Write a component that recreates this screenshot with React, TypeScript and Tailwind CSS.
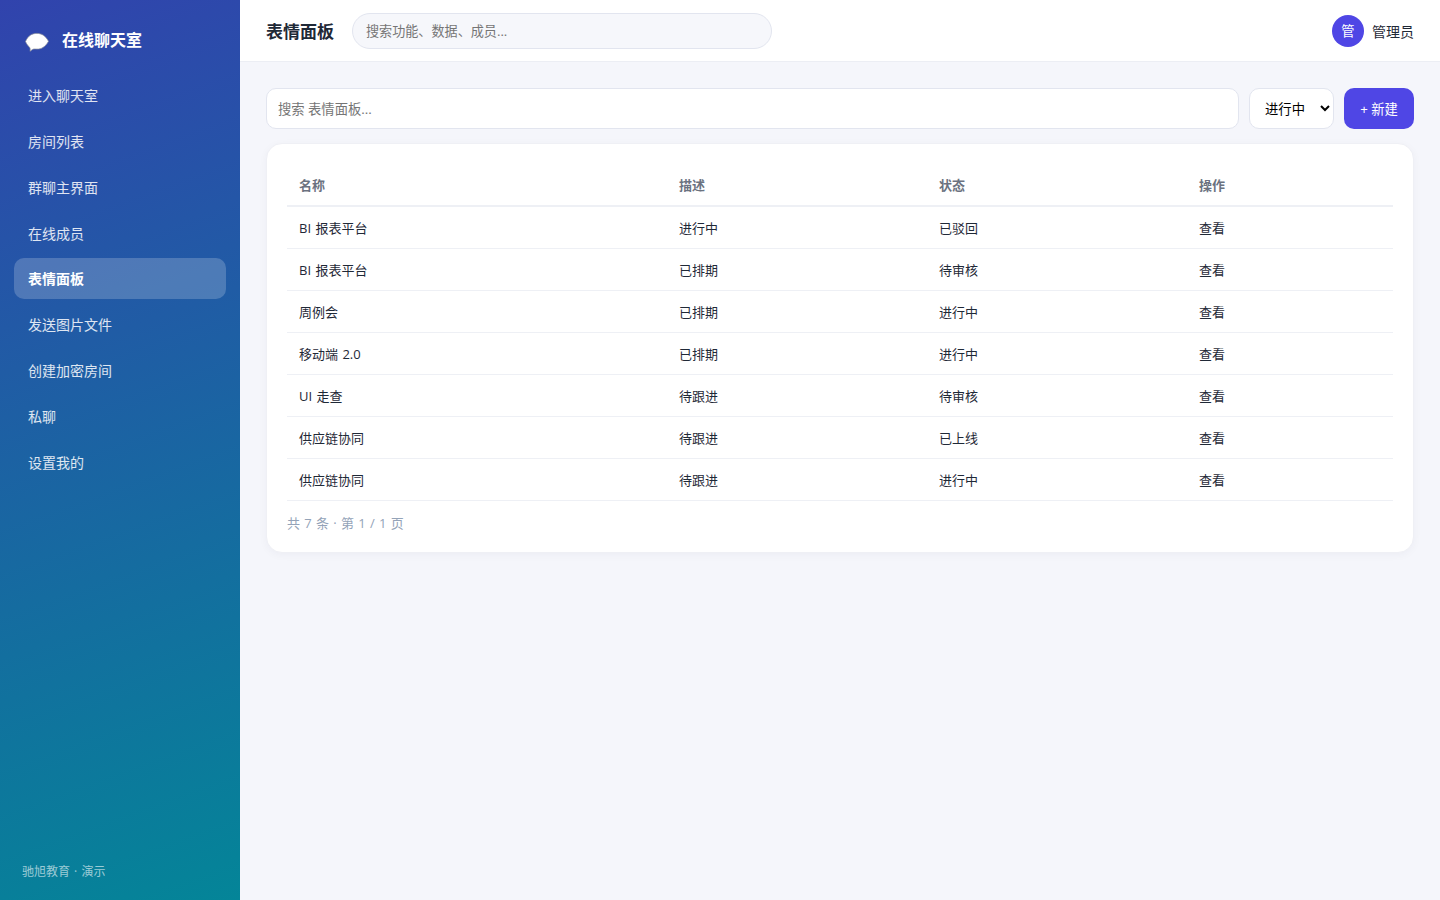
const navItems = [
  "进入聊天室",
  "房间列表",
  "群聊主界面",
  "在线成员",
  "表情面板",
  "发送图片文件",
  "创建加密房间",
  "私聊",
  "设置我的",
];

const rows = [
  ["BI 报表平台", "进行中", "已驳回"],
  ["BI 报表平台", "已排期", "待审核"],
  ["周例会", "已排期", "进行中"],
  ["移动端 2.0", "已排期", "进行中"],
  ["UI 走查", "待跟进", "待审核"],
  ["供应链协同", "待跟进", "已上线"],
  ["供应链协同", "待跟进", "进行中"],
];

function Sidebar({ active }: { active: string }) {
  return (
    <aside className="w-60 shrink-0 flex flex-col px-3.5 text-white bg-[linear-gradient(160deg,#3143ad,#048598)]">
      <div className="h-[74.5px] pt-[26px] pl-2.5 flex items-start gap-3">
        <svg width="26" height="28" viewBox="0 0 26 28" className="shrink-0">
          <path
            d="M12.8 7.4c4.800 0 8.500 2 11.700 7.900-3.300 5.900-7.200 7.800-11.500 7.800-1.200 0-2.100-.2-3.100-.1-1.500.1-2.800 1.600-3.900 2.300.3-1.800.3-3.100-.5-4C4 19.800 2.600 18 1.500 15.500 4.200 9.400 8.200 7.400 12.800 7.400z"
            fill="#fff"
            stroke="#8b8f9c"
            strokeWidth="0.7"
          />
        </svg>
        <span className="text-base leading-7 font-bold">在线聊天室</span>
      </div>

      <nav className="flex flex-col gap-[5px]">
        {navItems.map((item) => (
          <a
            key={item}
            className={
              item === active
                ? "h-[40.9px] pt-px px-3.5 flex items-center rounded-[10px] text-sm font-bold bg-white/20"
                : "h-[40.9px] pt-0.5 px-3.5 flex items-center rounded-[10px] text-sm text-white/85"
            }
          >
            {item}
          </a>
        ))}
      </nav>

      <div className="mt-auto mb-[19px] pl-2 text-xs leading-[18px] [word-spacing:1px] text-white/60">
        驰旭教育 · 演示
      </div>
    </aside>
  );
}

function Topbar({ title }: { title: string }) {
  return (
    <header className="h-[62px] shrink-0 flex items-center px-[26px] bg-white border-b border-[#eceef4]">
      <h1 className="w-[68px] mr-[18px] pt-0.5 text-[17px] font-bold whitespace-nowrap">
        {title}
      </h1>
      <input
        placeholder="搜索功能、数据、成员..."
        className="w-[420px] h-9 px-[13px] rounded-full border border-[#e2e5ef] bg-[#f6f7fb] text-[13.1px] placeholder:text-[#757575]"
      />
      <div className="ml-auto flex items-center gap-2">
        <span className="size-8 pt-0.5 rounded-full bg-[#4f46e5] text-white text-[13.333px] flex items-center justify-center">
          管
        </span>
        <span className="pt-0.5 text-sm">管理员</span>
      </div>
    </header>
  );
}

function Toolbar({ title }: { title: string }) {
  return (
    <div className="flex gap-2.5 mb-3.5 h-[41px] text-[13.333px]">
      <input
        placeholder={`搜索 ${title}...`}
        className="flex-1 pt-0.5 px-[11px] rounded-[10px] border border-[#e2e5ef] bg-white text-[13.3px] placeholder:text-[#757575]"
      />
      <select className="w-[85px] pl-[11px] rounded-[10px] border border-[#e2e5ef] bg-white text-[13.333px] text-black">
        <option>进行中</option>
      </select>
      <button className="w-[70px] pt-0.5 rounded-[10px] bg-[#4f46e5] text-white text-[13.333px]">
        + 新建
      </button>
    </div>
  );
}

function DataTable() {
  return (
    <section className="h-[410px] p-5 bg-white rounded-2xl border border-[#eff0f5] shadow-[0_2px_8px_rgba(20,30,80,0.04)]">
      <table className="w-full table-fixed border-separate border-spacing-0 text-[13px] text-left">
        <colgroup>
          <col className="w-[380px]" />
          <col className="w-[260px]" />
          <col className="w-[260px]" />
          <col />
        </colgroup>
        <thead>
          <tr className="h-[43px] text-[#6b7280]">
            {["名称", "描述", "状态", "操作"].map((name) => (
              <th key={name} className="px-3 pt-0.5 pb-0 font-bold border-b-2 border-[#eef0f5]">
                {name}
              </th>
            ))}
          </tr>
        </thead>
        <tbody>
          {rows.map((row, i) => (
            <tr key={i} className="h-[42px]">
              {[...row, "查看"].map((cell, j) => (
                <td key={j} className="px-3 pt-0.5 pb-0 [word-spacing:1px] border-b border-[#eef0f5]">
                  {cell}
                </td>
              ))}
            </tr>
          ))}
        </tbody>
      </table>
      <div className="mt-3 text-[13px] leading-5 [word-spacing:0.9px] text-[#94a3b8]">
        共 7 条 · 第 1 / 1 页
      </div>
    </section>
  );
}

export default function App() {
  const page = "表情面板";

  return (
    <div className="flex h-screen overflow-hidden bg-[#f5f6fb] text-[#1f2937] font-['Open_Sans','Noto_Sans_CJK_SC',sans-serif]">
      <Sidebar active={page} />
      <div className="flex-1 min-w-0 flex flex-col">
        <Topbar title={page} />
        <main className="flex-1 p-[26px]">
          <Toolbar title={page} />
          <DataTable />
        </main>
      </div>
    </div>
  );
}
